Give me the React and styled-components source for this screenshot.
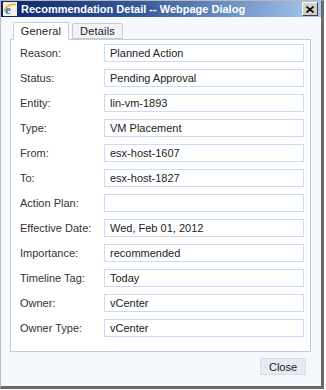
import React from 'react';
import styled, { createGlobalStyle } from 'styled-components';

const Global = createGlobalStyle`
  html, body {
    margin: 0;
    padding: 0;
    background: #ffffff;
  }
  body {
    font-family: "Liberation Sans", Arial, sans-serif;
    font-size: 11px;
    color: #222;
  }
`;

const Ventana = styled.div`
  width: 320px;
  height: 385px;
  border-left: 1px solid #b9b9b9;
  border-top: 1px solid #b9b9b9;
  border-right: 3px solid #6a6a6a;
  border-bottom: 3px solid #6a6a6a;
  background: #f5f8fc;
  display: flex;
  flex-direction: column;
`;

const BarraTitulo = styled.div`
  height: 16px;
  display: flex;
  align-items: center;
  padding: 0 3px 0 2px;
  background: linear-gradient(to right, #0a246a 0%, #3a5c9c 45%, #a6caf0 100%);
  gap: 4px;
`;

const Titulo = styled.span`
  flex: 1;
  color: #fff;
  font-weight: bold;
  font-size: 11px;
  white-space: nowrap;
`;

const BotonCerrar = styled.div`
  width: 14px;
  height: 12px;
  background: #d4d0c8;
  border: 1px solid;
  border-color: #fff #404040 #404040 #fff;
  display: flex;
  align-items: center;
  justify-content: center;
`;

const Cuerpo = styled.div`
  flex: 1;
  display: flex;
  flex-direction: column;
  padding: 4px 10px 0 9px;
`;

const Pestanas = styled.div`
  display: flex;
  align-items: flex-end;
  gap: 3px;
  padding-left: 3px;
  height: 18px;
  position: relative;
  z-index: 1;
`;

const Pestana = styled.div`
  height: ${(p) => (p.activa ? '18px' : '16px')};
  width: ${(p) => p.ancho}px;
  box-sizing: border-box;
  display: flex;
  align-items: center;
  justify-content: center;
  border: 1px solid #c6ccd6;
  border-bottom: ${(p) => (p.activa ? '1px solid #fff' : '1px solid #c6ccd6')};
  background: ${(p) => (p.activa ? '#ffffff' : '#f1f3f6')};
  border-radius: 2px 2px 0 0;
  color: #222;
  font-size: 11px;
  letter-spacing: 0.2px;
  margin-bottom: ${(p) => (p.activa ? '-1px' : '0')};
`;

const Panel = styled.div`
  border: 1px solid #c6ccd6;
  background: #fff;
  padding: 4px 6px 14px 9px;
  display: flex;
  flex-direction: column;
  gap: 7px;
`;

const Fila = styled.div`
  display: flex;
  align-items: center;
  height: 18px;
`;

const Etiqueta = styled.label`
  width: 84px;
  color: #333;
  font-size: 11px;
`;

const Campo = styled.div`
  width: 200px;
  height: 18px;
  box-sizing: border-box;
  border: 1px solid #c9dcf3;
  padding-left: 5px;
  display: flex;
  align-items: center;
  color: #222;
  font-size: 11px;
  background: #fff;
`;

const PiePagina = styled.div`
  display: flex;
  justify-content: flex-end;
  padding: 6px 5px 0 0;
`;

const BotonCierre = styled.button`
  width: 46px;
  height: 17px;
  border: 1px solid #d8dee8;
  background: #e6ebf3;
  font-family: inherit;
  font-size: 11px;
  color: #222;
  padding: 0;
`;

const IconoIE = () => (
  <svg width="14" height="14" viewBox="0 0 14 14">
    <rect x="0" y="0" width="14" height="14" fill="#f3f1e8" />
    <text x="2" y="12" fontFamily="Liberation Serif, serif" fontSize="13" fontWeight="bold" fill="#2a6fd0">e</text>
    <path d="M1 9 C3 3 11 1 13 3" stroke="#f0b020" strokeWidth="1.5" fill="none" />
  </svg>
);

const datos = [
  ['Reason:', 'Planned Action'],
  ['Status:', 'Pending Approval'],
  ['Entity:', 'lin-vm-1893'],
  ['Type:', 'VM Placement'],
  ['From:', 'esx-host-1607'],
  ['To:', 'esx-host-1827'],
  ['Action Plan:', ''],
  ['Effective Date:', 'Wed, Feb 01, 2012'],
  ['Importance:', 'recommended'],
  ['Timeline Tag:', 'Today'],
  ['Owner:', 'vCenter'],
  ['Owner Type:', 'vCenter'],
];

const App = () => {
  return (
    <>
      <Global />
      <Ventana>
        <BarraTitulo>
          <IconoIE />
          <Titulo>Recommendation Detail -- Webpage Dialog</Titulo>
          <BotonCerrar>
            <svg width="8" height="7" viewBox="0 0 8 7">
              <path d="M0.5 0.5 L7.5 6.5 M7.5 0.5 L0.5 6.5" stroke="#000" strokeWidth="1.6" />
            </svg>
          </BotonCerrar>
        </BarraTitulo>
        <Cuerpo>
          <Pestanas>
            <Pestana activa ancho={56}>General</Pestana>
            <Pestana ancho={51}>Details</Pestana>
          </Pestanas>
          <Panel>
            {datos.map(([etiqueta, valor]) => (
              <Fila key={etiqueta}>
                <Etiqueta>{etiqueta}</Etiqueta>
                <Campo>{valor}</Campo>
              </Fila>
            ))}
          </Panel>
          <PiePagina>
            <BotonCierre>Close</BotonCierre>
          </PiePagina>
        </Cuerpo>
      </Ventana>
    </>
  );
};

export default App;
